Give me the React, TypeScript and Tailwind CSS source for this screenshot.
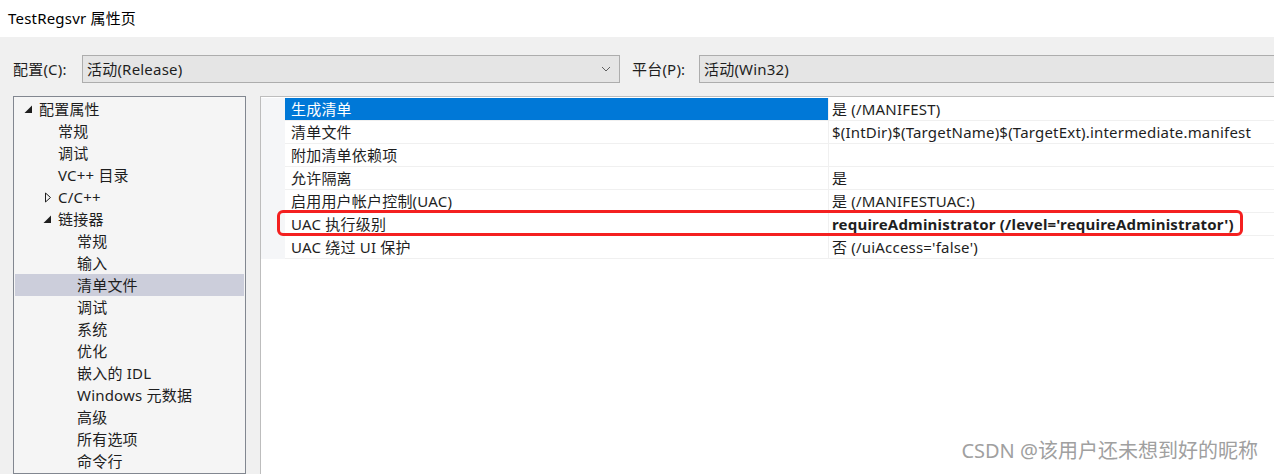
import React from 'react';

const FONT = { fontFamily: '"Segoe UI", "Noto Sans", "Noto Sans CJK SC", sans-serif' };

type TreeItem = { label: string; level: number; expander?: 'open' | 'closed'; selected?: boolean };

const TREE: TreeItem[] = [
  { label: '配置属性', level: 0, expander: 'open' },
  { label: '常规', level: 1 },
  { label: '调试', level: 1 },
  { label: 'VC++ 目录', level: 1 },
  { label: 'C/C++', level: 1, expander: 'closed' },
  { label: '链接器', level: 1, expander: 'open' },
  { label: '常规', level: 2 },
  { label: '输入', level: 2 },
  { label: '清单文件', level: 2, selected: true },
  { label: '调试', level: 2 },
  { label: '系统', level: 2 },
  { label: '优化', level: 2 },
  { label: '嵌入的 IDL', level: 2 },
  { label: 'Windows 元数据', level: 2 },
  { label: '高级', level: 2 },
  { label: '所有选项', level: 2 },
  { label: '命令行', level: 2 },
];

const PROPS = [
  { name: '生成清单', value: '是 (/MANIFEST)', selected: true },
  { name: '清单文件', value: '$(IntDir)$(TargetName)$(TargetExt).intermediate.manifest' },
  { name: '附加清单依赖项', value: '' },
  { name: '允许隔离', value: '是' },
  { name: '启用用户帐户控制(UAC)', value: '是 (/MANIFESTUAC:)' },
  { name: 'UAC 执行级别', value: "requireAdministrator (/level='requireAdministrator')", bold: true },
  { name: 'UAC 绕过 UI 保护', value: "否 (/uiAccess='false')" },
];

const Expander = ({ kind }: { kind: 'open' | 'closed' }) =>
  kind === 'open' ? (
    <svg width="9" height="9" viewBox="0 0 9 9" className="shrink-0">
      <polygon points="8,0.5 8,8 0.5,8" fill="#1e1e1e" />
    </svg>
  ) : (
    <svg width="8" height="11" viewBox="0 0 8 11" className="shrink-0">
      <polygon points="1.5,1 6.5,5.5 1.5,10" fill="none" stroke="#1e1e1e" strokeWidth="1" />
    </svg>
  );

export default function App() {
  return (
    <div
      className="relative w-[1274px] h-[474px] overflow-hidden bg-[#f0f0f0] flex flex-col tracking-[0.2px]"
      style={FONT}
    >
      {/* title bar */}
      <div className="h-[37px] bg-white flex items-center pl-[8px] shrink-0">
        <span className="text-[15px] text-black">TestRegsvr 属性页</span>
      </div>

      {/* config / platform row */}
      <div className="flex items-center mt-[18px] h-[28px] shrink-0">
        <span className="ml-[13px] w-[69px] text-[15px] text-[#1e1e1e]">配置(C):</span>
        <div className="w-[538px] h-[28px] bg-[#e5e5e5] border border-[#adadad] flex items-center pl-[4px] pr-[8px]">
          <span className="flex-1 text-[15px] text-[#1e1e1e]">活动(Release)</span>
          <svg width="10" height="6" viewBox="0 0 10 6">
            <polyline points="1,1 5,5 9,1" fill="none" stroke="#606060" strokeWidth="1" />
          </svg>
        </div>
        <span className="ml-[12px] w-[67px] text-[15px] text-[#1e1e1e]">平台(P):</span>
        <div className="flex-1 h-[28px] bg-[#e5e5e5] border border-r-0 border-[#adadad] flex items-center pl-[4px]">
          <span className="text-[15px] text-[#1e1e1e] whitespace-nowrap">活动(Win32)</span>
        </div>
      </div>

      {/* main area */}
      <div className="flex flex-1 mt-[13px] min-h-0">
        {/* tree */}
        <div className="ml-[13px] w-[233px] border border-[#828790] bg-[#f5f5f5] pt-[1px] px-[1px] overflow-hidden">
          {TREE.map((t, i) => (
            <div
              key={i}
              className={`h-[22px] flex items-center text-[15px] text-[#1e1e1e] ${t.selected ? 'bg-[#cccedb]' : ''}`}
            >
              <div
                className={`flex items-center justify-end pr-[6px] ${
                  t.level === 0 ? 'w-[24px]' : t.level === 1 ? 'w-[43px]' : 'w-[62px]'
                }`}
              >
                {t.expander && <Expander kind={t.expander} />}
              </div>
              <span className="whitespace-nowrap">{t.label}</span>
            </div>
          ))}
        </div>

        {/* property grid */}
        <div className="ml-[14px] flex-1 bg-white border-l border-t border-[#bdbdbd] pt-[1px] overflow-hidden">
          {PROPS.map((p, i) => (
            <div key={i} className="flex h-[23px]">
              <div className="w-[24px] bg-[#f5f6f8] shrink-0" />
              <div
                className={`w-[543px] shrink-0 flex items-center pl-[6px] text-[15px] border-b border-[#f0f0f0] ${
                  p.selected ? 'bg-[#0078d7] text-white' : 'text-[#1e1e1e]'
                }`}
              >
                <span className="whitespace-nowrap">{p.name}</span>
              </div>
              <div
                className={`flex-1 flex items-center pl-[3px] text-[15px] text-[#1e1e1e] border-l border-b border-[#f0f0f0] ${
                  p.bold ? 'font-bold' : ''
                }`}
              >
                <span className="whitespace-nowrap">{p.value}</span>
              </div>
            </div>
          ))}
        </div>
      </div>

      {/* red highlight */}
      <div className="absolute left-[277px] top-[210px] w-[966px] h-[26px] border-[3px] border-[#f42020] rounded-[6px]" />

      {/* watermark */}
      <div className="absolute right-[16px] bottom-[8px] text-[20px] tracking-normal text-[#a0a0a0] whitespace-nowrap [text-shadow:1px_1px_0_#ffffff]">
        CSDN @该用户还未想到好的昵称
      </div>
    </div>
  );
}
